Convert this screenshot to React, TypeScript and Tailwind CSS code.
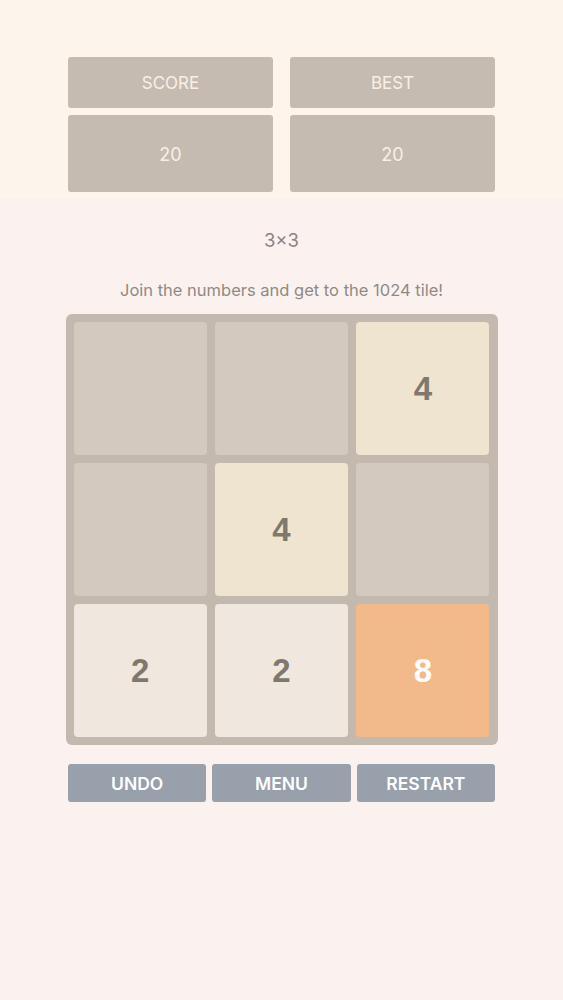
import React from 'react';

type Tile = number | null;

const board: Tile[] = [null, null, 4, null, 4, null, 2, 2, 8];

const tileStyle = (v: Tile) => {
  if (v === null) return 'bg-[#d4c9bf]';
  if (v === 2) return 'bg-[#f0e7de] text-[#80776e]';
  if (v === 4) return 'bg-[#efe4cf] text-[#80776e]';
  return 'bg-[#f2ba8b] text-white';
};

function ScoreBox({ label, value }: { label: string; value: number }) {
  return (
    <div className="flex flex-col gap-[7px]">
      <div className="h-[51px] pt-[3px] rounded-[3px] bg-[#c6bbb1] flex items-center justify-center text-[17px] text-[#f8f0e8]">
        {label}
      </div>
      <div className="h-[77px] pt-[2px] rounded-[3px] bg-[#c6bbb1] flex items-center justify-center text-[18px] text-[#f8f0e8]">
        {value}
      </div>
    </div>
  );
}

export default function App() {
  return (
    <div className="min-h-screen bg-[#fbf2ef] font-['Inter','Liberation_Sans',sans-serif]">
      <div className="bg-[#fdf5ec] pt-[57px] pb-[6px]">
        <div className="w-[427px] mx-auto grid grid-cols-2 gap-[17px]">
          <ScoreBox label="SCORE" value={20} />
          <ScoreBox label="BEST" value={20} />
        </div>
      </div>

      <div className="flex flex-col items-center">
        <div className="mt-[30px] h-[24px] leading-[24px] text-[18.5px] text-[#8a847e]">3×3</div>
        <p className="mt-[28px] h-[20px] leading-[20px] text-[16.5px] text-[#8f8a85]">
          Join the numbers and get to the 1024 tile!
        </p>

        <div className="mt-[14px] w-[432px] h-[431px] p-[8px] rounded-[6px] bg-[#c4b9af] grid grid-cols-3 grid-rows-3 gap-[8px]">
          {board.map((v, i) => (
            <div
              key={i}
              className={`rounded-[4px] flex items-center justify-center text-[33px] font-bold font-['Liberation_Sans',sans-serif] ${tileStyle(v)}`}
            >
              {v ?? ''}
            </div>
          ))}
        </div>

        <div className="mt-[19px] w-[427px] grid grid-cols-3 gap-[6px]">
          {['UNDO', 'MENU', 'RESTART'].map((b) => (
            <button
              key={b}
              className="h-[38px] pt-[2px] rounded-[3px] bg-[#97a0ab] text-white text-[17.5px] font-semibold"
            >
              {b}
            </button>
          ))}
        </div>
      </div>
    </div>
  );
}
